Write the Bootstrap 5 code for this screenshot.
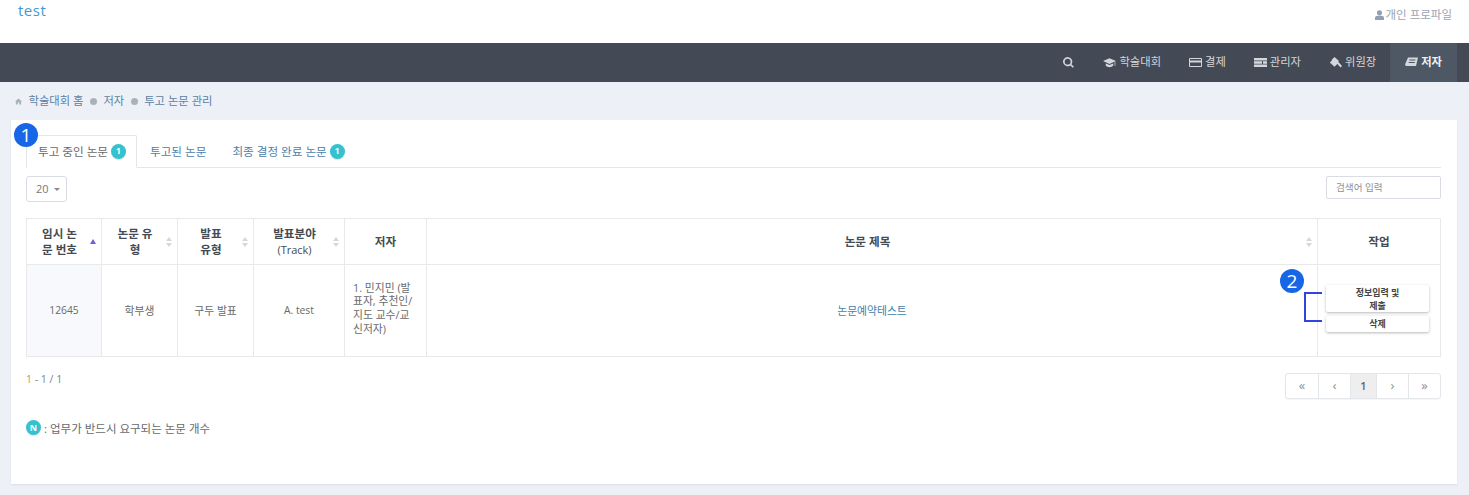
<!DOCTYPE html>
<html lang="ko">
<head>
<meta charset="utf-8">
<title>test</title>
<link href="https://cdn.jsdelivr.net/npm/bootstrap@5.3.0/dist/css/bootstrap.min.css" rel="stylesheet">
<style>
html,body{height:495px;overflow:hidden}
body{background:#edf1f7;font-family:"Open Sans","Noto Sans CJK KR",sans-serif;font-size:11px;color:#676a6c}
.top-head{height:43px;background:#fff;padding:0 17px 0 18px}
.brand-name{font-size:15px;color:#3f9bd5;line-height:20px;letter-spacing:.5px}
.profile-link{font-size:11.5px;color:#9aa5b1;line-height:14px;margin-top:8px;height:14px}
.profile-link svg{width:9px;height:10px;fill:#8fa0b3;margin-right:2px}
.main-bar{height:39px;background:#434a56;padding-right:12px}
.main-bar a{height:39px;color:#d3d6da;text-decoration:none;font-size:11.3px;padding:0 14px;gap:3px}
.main-bar a.is-on{background:#4d5864;color:#eef0f2;font-weight:700;padding:0 15px}
.main-bar svg{width:13px;height:11px;fill:#d3d6da}
.crumb-row{height:38px;padding-left:15px;gap:6.5px;color:#5b7fa3;font-size:11.3px}
.crumb-row i{display:block;width:7px;height:7px;border-radius:50%;background:#a9b1bb}
.crumb-row svg{width:7px;height:7px;fill:#a9b1bb}
.sheet{position:relative;height:364px;margin:0 12px 0 11px;background:#fff;padding:15px 16px 15px 15px;box-shadow:0 1px 2px rgba(0,0,0,.08)}
.tab-row{height:33px;border-bottom:1px solid #e3e6ea}
.tab-row .tab-item{height:33px;display:flex;align-items:center;gap:3px;padding:0 13px;color:#4e80a8;font-size:11.6px;text-decoration:none}
.tab-row .tab-item.is-on{background:#fff;border:1px solid #e3e6ea;border-bottom-color:#fff;color:#676a6c;padding:0 10px 0 11px;border-radius:2px 2px 0 0}
.count-dot{display:inline-flex;align-items:center;justify-content:center;width:15px;height:15px;border-radius:50%;background:#35c2cf;color:#fff;font-size:8.5px;font-weight:700;box-shadow:0 1px 1px rgba(0,0,0,.12)}
.tool-row{height:26px;margin-top:8px}
.size-pick{width:41px;height:26px;border:1px solid #d9dde3;border-radius:3px;color:#777;font-size:11px;padding-left:9px;gap:5px}
.size-pick b{display:block;border-top:3px solid #888;border-left:3px solid transparent;border-right:3px solid transparent}
.find-box{width:115px;height:23px;border:1px solid #d9dde3;border-radius:2px;font-size:9.6px;padding:0 9px;color:#777;font-family:inherit}
.find-box::placeholder{color:#8b8f94}
.paper-table{table-layout:fixed;width:1414px;margin:16px 0 0;border-collapse:collapse;color:#676a6c}
.paper-table th,.paper-table td{border:1px solid #e8e9eb;text-align:center;vertical-align:middle;padding:0 10px;position:relative;background:#fff;color:#676a6c;font-size:10.8px;line-height:13.5px;box-shadow:none}
.paper-table th{height:46px;font-weight:600;color:#444b52;line-height:15.5px;font-size:11.6px;padding:0 10px}
.paper-table th.sort-col{padding:0 22px 0 13px}
.paper-table td{height:92px}
.paper-table td.first-cell{background:#f8f9fc}
.paper-table .latin-text{font-size:10.3px}
.paper-table th .track-text{font-size:11px;font-weight:400}
.paper-table td.author-cell{text-align:left;padding:0 12px 5px 8px;line-height:13.7px;word-break:break-all}
.paper-table a{color:#3f7fae;text-decoration:none}
.c1{width:75px}.c2,.c3{width:76px}.c4{width:91px}.c5{width:82px}.c6{width:891px}.c7{width:123px}
.sorter{position:absolute;right:5px;top:50%;margin-top:-5px;width:6px;height:10px;display:block}
.sorter svg{display:block;width:6px;height:10px}
.act-btn{display:block;width:103px;margin:0 0 0 8px;border:0;background:#fff;color:#444;font-size:9px;font-weight:600;line-height:13px;border-radius:2px;box-shadow:0 1px 3px rgba(0,0,0,.28);padding:1px 24px 0;word-break:keep-all}
.act-btn.one-line{margin-top:4px;padding:0 10px;height:16px}
.act-stack{margin-top:-5px}
.list-foot{height:26px;margin-top:16px}
.range-text{font-size:10.5px;color:#7b8188;margin-top:-1px}
.range-text em{font-style:normal;color:#c29a4f}
.page-set{border:1px solid #e3e6ea;border-radius:3px;height:26px;box-shadow:0 1px 1px rgba(0,0,0,.04);width:156px}
.page-set span{width:32px;display:flex;align-items:center;justify-content:center;border-left:1px solid #e3e6ea;color:#8a8e93;font-size:13px}
.page-set span:first-child{border-left:0}
.page-set span:last-child{flex-grow:1}
.page-set span.is-on{background:#eee;font-weight:600;color:#666;width:26px;font-size:11px}
.note-line{margin-top:23px;gap:3px;font-size:11.5px;color:#676a6c;line-height:14px}
.note-line .count-dot{width:15px;height:15px;margin-top:-3px;font-size:9px}
.mark-num{position:absolute;width:24px;height:24px;border-radius:50%;background:#1666e5;color:#fff;font-size:19px;line-height:24px;text-align:center;font-family:"Open Sans",sans-serif}
.mark-a{left:3px;top:3px}
.mark-b{left:1269px;top:149px}
.bracket{position:absolute;left:1293px;top:172px;width:18px;height:30px;border:solid #3344dd;border-width:2px 0 2px 2px}
</style>
</head>
<body>
<div class="top-head d-flex justify-content-between align-items-start">
  <div class="brand-name">test</div>
  <div class="profile-link d-flex align-items-center">
    <svg viewBox="0 0 10 11"><circle cx="5" cy="3" r="2.8"/><path d="M0 11V8.500C0 6.800 2 6 5 6s5 .8 5 2.500V11z"/></svg>개인 프로파일
  </div>
</div>
<nav class="main-bar d-flex justify-content-end align-items-center">
  <a href="#" class="d-flex align-items-center"><svg viewBox="0 0 13 13"><path d="M5.500 0a5.500 5.500 0 1 0 3.200 10l2.800 2.800 1.400-1.400L10 8.600A5.500 5.500 0 0 0 5.500 0zm0 2a3.500 3.500 0 1 1 0 7 3.500 3.500 0 0 1 0-7z"/></svg></a>
  <a href="#" class="d-flex align-items-center"><svg viewBox="0 0 14 11"><path d="M7 1 0 4l7 3 7-3zM3 6.500V9c1 1 2.500 1.500 4 1.500S10 10 11 9V6.500L7 8.200zM12.500 5v4h.8V4.700z"/></svg>학술대회</a>
  <a href="#" class="d-flex align-items-center"><svg viewBox="0 0 13 11"><path d="M1 1h11a1 1 0 0 1 1 1v7a1 1 0 0 1-1 1H1a1 1 0 0 1-1-1V2a1 1 0 0 1 1-1zm0 1v1.500h11V2zm0 3.500V9h11V5.500z"/></svg>결제</a>
  <a href="#" class="d-flex align-items-center"><svg viewBox="0 0 13 11"><path d="M0 1h13v2.500H0zM0 4.300h8v2.500H0zM9 4.300h4v2.500H9zM0 7.600h13V10H0z"/></svg>관리자</a>
  <a href="#" class="d-flex align-items-center"><svg viewBox="0 0 13 11"><path d="M5.500 0 10 4 7 7 2.500 3zM.8 5.500 4 2.500l4.500 4.200-3 3zM7.500 6l1.500-1.500 4 4.500-1.500 1.500z"/></svg>위원장</a>
  <a href="#" class="d-flex align-items-center is-on"><svg viewBox="0 0 13 11"><path fill-rule="evenodd" d="M3 .5h10l-2 8.500H2a2 2 0 0 1-2-1.500zM4.500 2.500 4.200 3.500h6l.3-1zM3.900 5l-.3 1h6l.3-1z"/></svg>저자</a>
</nav>
<div class="crumb-row d-flex align-items-center">
  <svg viewBox="0 0 8 8"><path d="M4 .5 0 4h1v3.500h2.200V5h1.600v2.500H7V4h1z"/></svg>
  <span>학술대회 홈</span><i></i><span>저자</span><i></i><span>투고 논문 관리</span>
</div>
<main class="sheet">
  <div class="mark-num mark-a">1</div>
  <div class="tab-row d-flex">
    <a href="#" class="tab-item is-on">투고 중인 논문<span class="count-dot">1</span></a>
    <a href="#" class="tab-item">투고된 논문</a>
    <a href="#" class="tab-item">최종 결정 완료 논문<span class="count-dot">1</span></a>
  </div>
  <div class="tool-row d-flex justify-content-between">
    <div class="size-pick d-flex align-items-center">20<b></b></div>
    <input class="find-box" type="text" placeholder="검색어 입력">
  </div>
  <table class="paper-table">
    <colgroup><col class="c1"><col class="c2"><col class="c3"><col class="c4"><col class="c5"><col class="c6"><col class="c7"></colgroup>
    <thead><tr>
      <th class="sort-col">임시 논문 번호<span class="sorter"><svg viewBox="0 0 6 10"><path d="M3 2 6 7H0z" fill="#6a62d8"/></svg></span></th>
      <th class="sort-col">논문 유형<span class="sorter"><svg viewBox="0 0 6 10"><path d="M3 0 6 4H0zM3 10 0 6h6z" fill="#d5d7da"/></svg></span></th>
      <th class="sort-col">발표<br>유형<span class="sorter"><svg viewBox="0 0 6 10"><path d="M3 0 6 4H0zM3 10 0 6h6z" fill="#d5d7da"/></svg></span></th>
      <th class="sort-col">발표분야<br><span class="track-text">(Track)</span><span class="sorter"><svg viewBox="0 0 6 10"><path d="M3 0 6 4H0zM3 10 0 6h6z" fill="#d5d7da"/></svg></span></th>
      <th>저자</th>
      <th class="sort-col">논문 제목<span class="sorter"><svg viewBox="0 0 6 10"><path d="M3 0 6 4H0zM3 10 0 6h6z" fill="#d5d7da"/></svg></span></th>
      <th>작업</th>
    </tr></thead>
    <tbody><tr>
      <td class="first-cell"><span class="latin-text">12645</span></td>
      <td>학부생</td>
      <td>구두 발표</td>
      <td><span class="latin-text">A. test</span></td>
      <td class="author-cell">1. 민지민 (발표자, 추천인/지도 교수/교신저자)</td>
      <td><a href="#">논문예약테스트</a></td>
      <td class="px-0"><div class="act-stack"><button class="act-btn" type="button">정보입력 및 제출</button><button class="act-btn one-line" type="button">삭제</button></div></td>
    </tr></tbody>
  </table>
  <div class="mark-num mark-b">2</div>
  <div class="bracket"></div>
  <div class="list-foot d-flex justify-content-between">
    <div class="range-text"><em>1</em> - 1 / 1</div>
    <div class="page-set d-flex"><span>«</span><span>‹</span><span class="is-on">1</span><span>›</span><span>»</span></div>
  </div>
  <div class="note-line d-flex align-items-center"><span class="count-dot">N</span><span>: 업무가 반드시 요구되는 논문 개수</span></div>
</main>
<script src="https://cdn.jsdelivr.net/npm/bootstrap@5.3.0/dist/js/bootstrap.bundle.min.js"></script>
</body>
</html>
